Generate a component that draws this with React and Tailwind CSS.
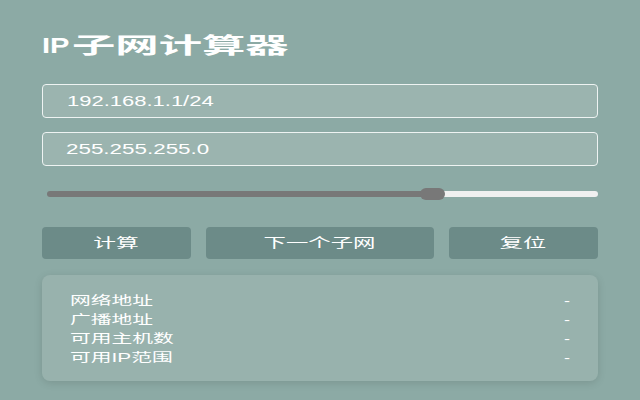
export default function App() {
  const font = { fontFamily: '"Liberation Sans", "Noto Sans CJK SC", sans-serif' };
  const rows = ["网络地址", "广播地址", "可用主机数", "可用IP范围"];
  return (
    <div className="w-[640px] h-[400px] bg-[#8caaa5] text-white overflow-hidden" style={font}>
      <div className="px-[42px] pt-[31px]">
        <h1 className="text-[22px] font-bold leading-[30px] h-[30px] flex whitespace-nowrap">
          <span className="w-[30px] shrink-0"><span className="inline-block origin-left scale-x-[1.32]">IP</span></span>
          <span className="inline-block origin-left scale-x-[1.97]">子网计算器</span>
        </h1>
        <div className="mt-[23px] h-[34px] rounded-[4px] border border-[#eef3f2] bg-[#9bb4af] flex items-center pl-[24px] text-[14px] whitespace-nowrap">
          <span className="inline-block origin-left scale-x-[1.57]">192.168.1.1/24</span>
        </div>
        <div className="mt-[14px] h-[34px] rounded-[4px] border border-[#eef3f2] bg-[#9bb4af] flex items-center pl-[23px] text-[14px] whitespace-nowrap">
          <span className="inline-block origin-left scale-x-[1.6]">255.255.255.0</span>
        </div>
        <div className="mt-[22px] relative h-[12px] ml-[5px]">
          <div className="absolute left-0 right-0 top-[3px] h-[6px] rounded-full flex overflow-hidden">
            <div className="w-[385px] bg-[#787878]" />
            <div className="flex-1 bg-[#f0f0f0]" />
          </div>
          <div className="absolute left-[373px] top-0 w-[25px] h-[12px] rounded-full bg-[#787878]" />
        </div>
        <div className="mt-[27px] grid grid-cols-[149px_1fr_149px] gap-[15px] text-[13px] whitespace-nowrap">
          <div className="h-[32px] rounded-[4px] bg-[#6c8b88] flex items-center justify-center">
            <span className="inline-block scale-x-[1.75]">计算</span>
          </div>
          <div className="h-[32px] rounded-[4px] bg-[#6c8b88] flex items-center justify-center">
            <span className="inline-block scale-x-[1.72]">下一个子网</span>
          </div>
          <div className="h-[32px] rounded-[4px] bg-[#6c8b88] flex items-center justify-center">
            <span className="inline-block scale-x-[1.78]">复位</span>
          </div>
        </div>
        <div className="mt-[16px] h-[106px] rounded-[8px] bg-[#98b2ad] shadow-[0_2px_8px_rgba(0,0,0,0.12)] pl-[28px] pr-[28px] pt-[16px] text-[12px] whitespace-nowrap">
          {rows.map((r) => (
            <div key={r} className="flex justify-between items-center h-[19px]">
              <span className="inline-block origin-left scale-x-[1.73]">{r}</span>
              <span className="inline-block origin-right scale-x-[1.5]">-</span>
            </div>
          ))}
        </div>
      </div>
    </div>
  );
}
